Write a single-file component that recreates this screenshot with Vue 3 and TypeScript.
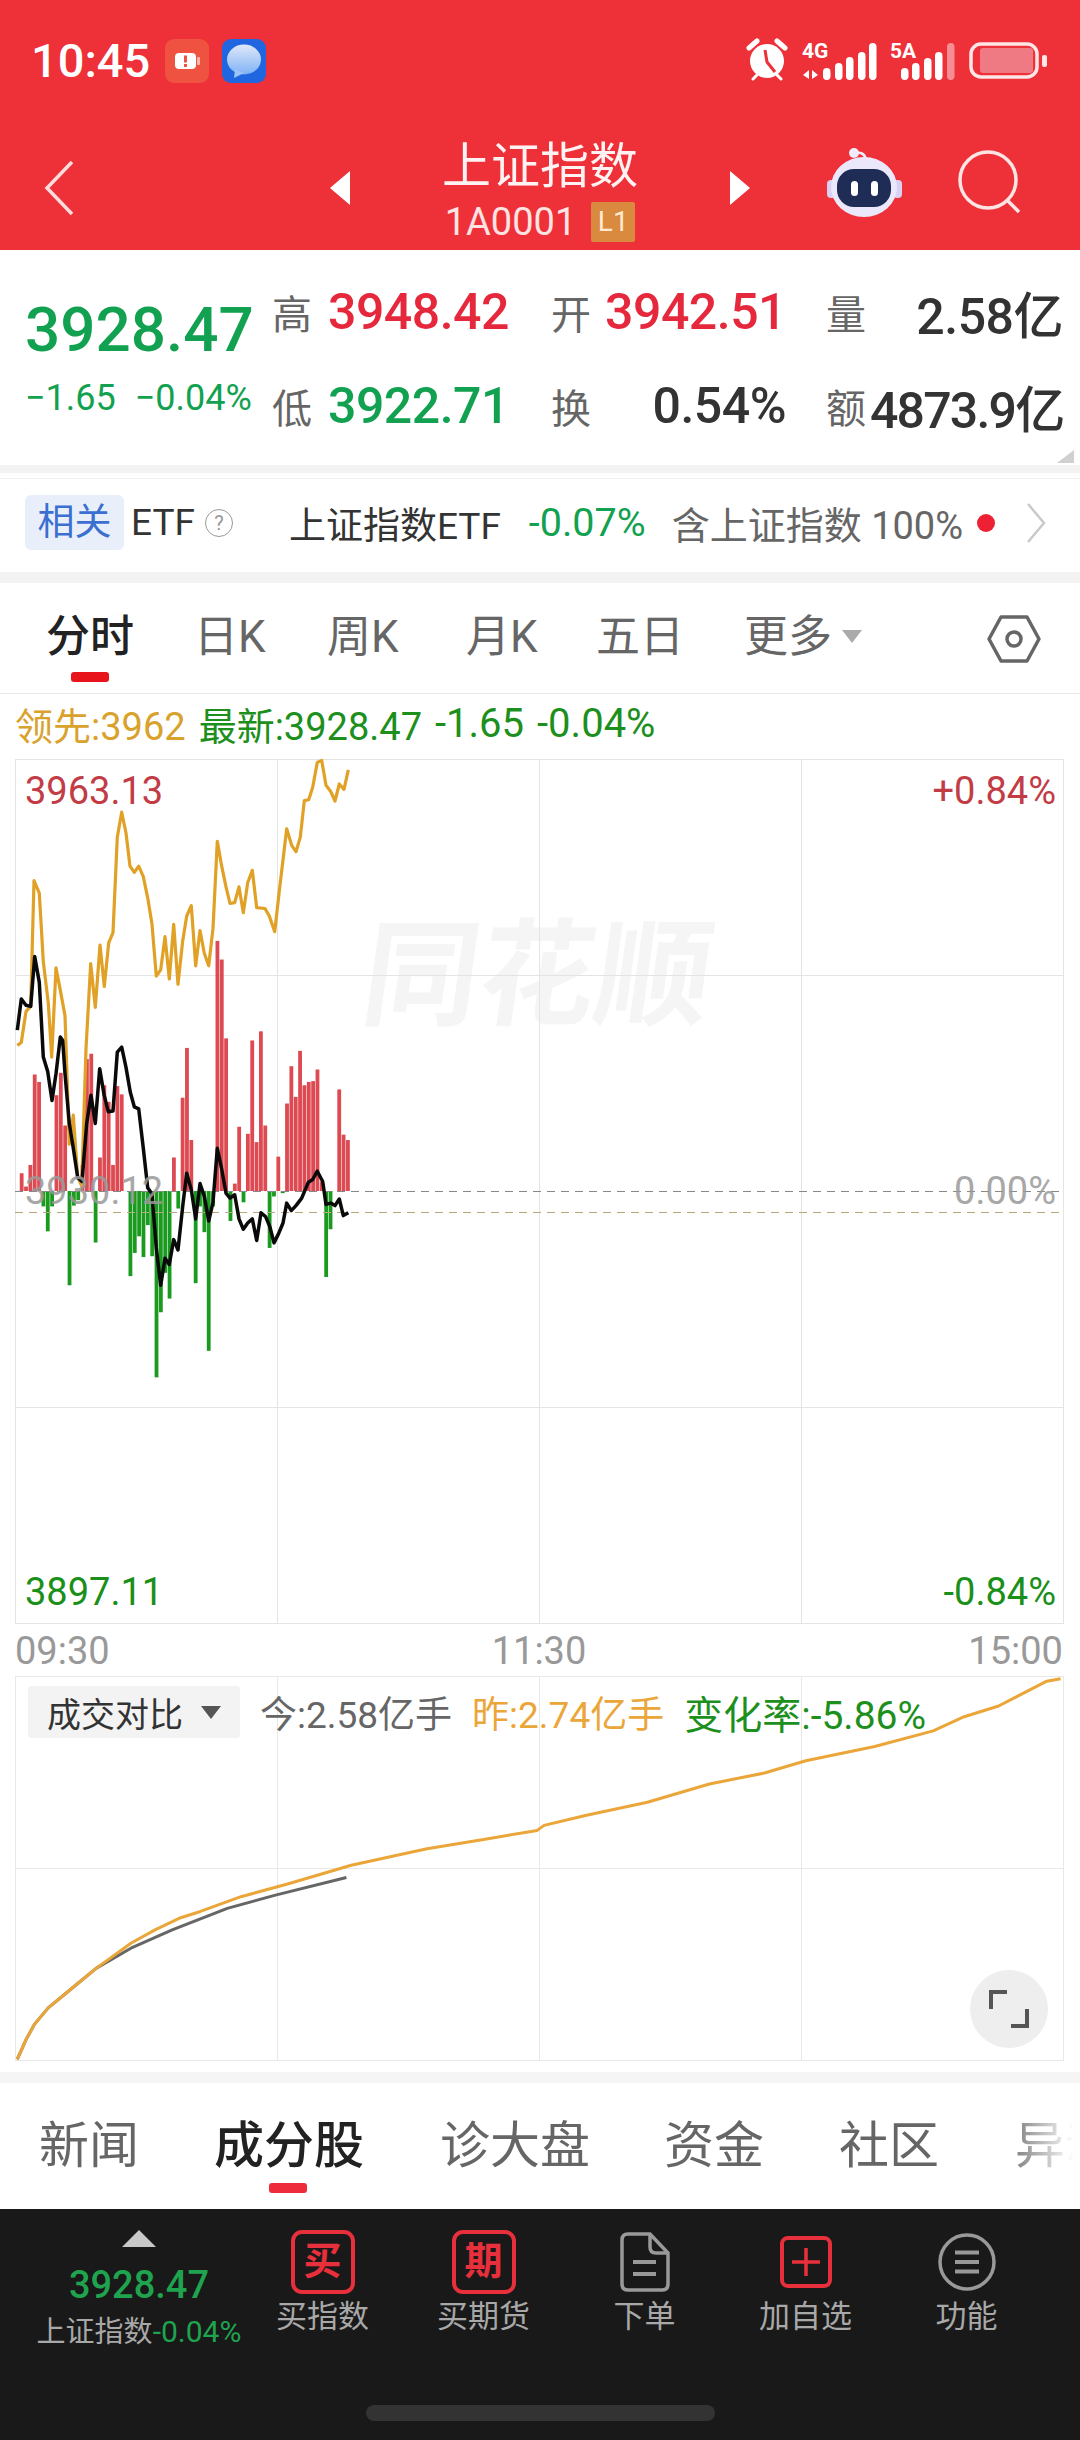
<template>
  <div class="page">
    <header class="top">
      <div class="status">
        <span class="time">10:45</span>
        <svg class="app-icon" viewBox="0 0 44 44">
          <rect width="44" height="44" rx="9" fill="#ef5240" />
          <rect x="10" y="14" width="21" height="16" rx="4" fill="#fff" />
          <rect x="32" y="18" width="3" height="8" rx="1" fill="#f7b9ae" />
          <rect x="19" y="16.500" width="3" height="7" fill="#ef5240" />
          <rect x="19" y="25" width="3" height="3" fill="#ef5240" />
        </svg>
        <svg class="app-icon" viewBox="0 0 44 44">
          <defs>
            <linearGradient id="msg" x1="0" y1="0" x2="0" y2="1">
              <stop offset="0" stop-color="#dfe8f8" />
              <stop offset="1" stop-color="#7fb2f5" />
            </linearGradient>
          </defs>
          <rect width="44" height="44" rx="9" fill="#1f66e0" />
          <ellipse cx="22" cy="20.500" rx="17" ry="15" fill="url(#msg)" />
          <path d="M13 30 L12 39 L22 34 Z" fill="#9cc3f6" />
        </svg>
        <div class="status-right">
          <svg width="302" height="46" viewBox="745 38 302 46">
            <circle cx="767" cy="61" r="17" fill="#fff" />
            <path d="M749 48 L757 41 M785 48 L777 41" stroke="#fff" stroke-width="5" stroke-linecap="round" />
            <path d="M753 79 L757 75 M781 79 L777 75" stroke="#fff" stroke-width="3" stroke-linecap="round" />
            <path d="M765 50 L767 62 L775 72" fill="none" stroke="#ee3038" stroke-width="3" />
            <text x="802" y="58" class="net">4G</text>
            <path d="M809 70 L803 75 L809 79 Z M812 70 L818 75 L812 79 Z" fill="#fff" />
            <rect v-for="b in signalA" :key="b.x" :x="b.x" :y="b.y" width="7.500" :height="80 - b.y" rx="3.700" fill="#fff" />
            <text x="890" y="58" class="net">5A</text>
            <rect v-for="b in signalB" :key="b.x" :x="b.x" :y="b.y" width="7.500" :height="80 - b.y" rx="3.700" :fill="b.x > 945 ? '#f58d93' : '#fff'" />
            <rect x="971" y="44" width="66" height="33" rx="10" fill="none" stroke="#ffe6e6" stroke-width="3.500" />
            <rect x="980" y="48" width="53" height="25" rx="3" fill="#f07a84" />
            <rect x="1042" y="55" width="5" height="12" rx="2" fill="#ffe6e6" />
          </svg>
        </div>
      </div>
      <div class="nav">
        <svg class="back" width="34" height="60" viewBox="0 0 34 60">
          <path d="M30 4 L5 30 L30 56" fill="none" stroke="#ffdcdc" stroke-width="3.500" />
        </svg>
        <div class="nav-center">
          <span class="tri-left"></span>
          <div class="title-block">
            <div class="title">上证指数</div>
            <div class="code">1A0001 <span class="level">L1</span></div>
          </div>
          <span class="tri-right"></span>
        </div>
        <div class="nav-right">
          <svg width="76" height="72" viewBox="829 147 76 72">
            <path d="M857 154 Q866 150 869 159" fill="none" stroke="#f0ecfb" stroke-width="2.500" />
            <circle cx="857" cy="153" r="5" fill="#f0ecfb" />
            <rect x="830" y="180" width="9" height="18" rx="4" fill="#d9d0f3" />
            <rect x="896" y="180" width="9" height="18" rx="4" fill="#d9d0f3" />
            <ellipse cx="867" cy="187" rx="33" ry="30" fill="#ece8fb" />
            <rect x="840" y="169" width="54" height="38" rx="17" fill="#1f2c55" />
            <rect x="854" y="181" width="7" height="15" rx="3.500" fill="#fff" />
            <rect x="874" y="181" width="7" height="15" rx="3.500" fill="#fff" />
          </svg>
          <svg width="66" height="70" viewBox="960 150 66 70">
            <circle cx="991" cy="183" r="28" fill="none" stroke="#ffe4e4" stroke-width="3.500" />
            <path d="M1011 204 L1022 215" stroke="#ffe4e4" stroke-width="3.500" />
          </svg>
        </div>
      </div>
    </header>

    <section class="quote">
      <div class="quote-main">
        <div class="price">3928.47</div>
        <div class="change"><span>−1.65</span><span>−0.04%</span></div>
      </div>
      <div class="quote-grid">
        <div class="stat"><span class="stat-label">高</span><span class="stat-value left up">3948.42</span></div>
        <div class="stat"><span class="stat-label">开</span><span class="stat-value up">3942.51</span></div>
        <div class="stat"><span class="stat-label">量</span><span class="stat-value">2.58亿</span></div>
        <div class="stat"><span class="stat-label">低</span><span class="stat-value left down">3922.71</span></div>
        <div class="stat"><span class="stat-label">换</span><span class="stat-value">0.54%</span></div>
        <div class="stat"><span class="stat-label">额</span><span class="stat-value tight">4873.9亿</span></div>
      </div>
      <svg class="corner" width="17" height="13" viewBox="0 0 17 13"><path d="M17 0 V13 H0 Z" fill="#d0d0d0" /></svg>
    </section>

    <section class="related">
      <span class="related-tag">相关</span>
      <span class="etf">ETF</span>
      <span class="help">?</span>
      <span class="etf-name">上证指数ETF</span>
      <span class="etf-change">-0.07%</span>
      <span class="etf-hold">含上证指数 100%</span>
      <span class="dot"></span>
      <svg width="20" height="44" viewBox="0 0 20 44"><path d="M2 3 L18 22 L2 41" fill="none" stroke="#c9c9c9" stroke-width="2.500" /></svg>
    </section>
    <div class="band"></div>

    <nav class="periods">
      <span class="period active">分时</span>
      <span class="period">日K</span>
      <span class="period">周K</span>
      <span class="period">月K</span>
      <span class="period">五日</span>
      <span class="period more">更多<i class="caret"></i></span>
      <svg class="gear" width="54" height="48" viewBox="0 0 54 48">
        <path d="M14 2 H40 L52 24 L40 46 H14 L2 24 Z" fill="none" stroke="#666" stroke-width="3.500" stroke-linejoin="round" />
        <circle cx="27" cy="24" r="7" fill="none" stroke="#666" stroke-width="3.500" />
      </svg>
    </nav>

    <div class="legend">
      <span class="gold">领先:3962</span>
      <span class="green">最新:3928.47</span>
      <span class="green wide">-1.65</span>
      <span class="green wide">-0.04%</span>
    </div>

    <svg class="chart-main" width="1080" height="866" viewBox="0 759 1080 866">
      <text x="358" y="1016" class="watermark" transform="skewX(-8) translate(143 0)">同花顺</text>
      <rect x="15.500" y="759.500" width="1048" height="864" fill="none" stroke="#e4e4e4" />
      <path d="M277.500 759 V1623 M539.500 759 V1623 M801.500 759 V1623 M15 975.500 H1064 M15 1407.500 H1064" stroke="#e4e4e4" />
      <rect v-for="bar in bars" :key="bar.x" :x="bar.x" :y="bar.y" width="3.800" :height="bar.h" :fill="bar.fill" />
      <path d="M15 1191.500 H1064" stroke="#888" stroke-dasharray="8 6" />
      <path d="M15 1212.500 H1064" stroke="#b8a97c" stroke-dasharray="8 6" />
      <polyline :points="goldLine" fill="none" stroke="#e0a126" stroke-width="3.200" stroke-linejoin="round" />
      <polyline :points="blackLine" fill="none" stroke="#0a0a0a" stroke-width="3.500" stroke-linejoin="round" />
      <text x="25" y="804" class="axis red">3963.13</text>
      <text x="1056" y="804" class="axis red" text-anchor="end">+0.84%</text>
      <text x="25" y="1204" class="axis muted">3930.12</text>
      <text x="1056" y="1204" class="axis muted" text-anchor="end">0.00%</text>
      <text x="25" y="1605" class="axis grn">3897.11</text>
      <text x="1056" y="1605" class="axis grn" text-anchor="end">-0.84%</text>
    </svg>

    <div class="times">
      <span>09:30</span>
      <span>11:30</span>
      <span>15:00</span>
    </div>

    <div class="compare">
      <svg width="1080" height="396" viewBox="0 1676 1080 396">
        <rect x="15.500" y="1676.500" width="1048" height="384" fill="none" stroke="#e8e8e8" />
        <path d="M277.500 1676 V2060 M539.500 1676 V2060 M801.500 1676 V2060 M15 1868.500 H1064" stroke="#e8e8e8" />
        <polyline :points="todayLine" fill="none" stroke="#666" stroke-width="3" stroke-linejoin="round" />
        <polyline :points="yesterdayLine" fill="none" stroke="#eba63a" stroke-width="3" stroke-linejoin="round" />
      </svg>
      <div class="compare-head">
        <span class="dropdown">成交对比<i class="caret dark"></i></span>
        <span class="gray">今:2.58亿手</span>
        <span class="orange">昨:2.74亿手</span>
        <span class="green rate">变化率:-5.86%</span>
      </div>
      <button class="expand">
        <svg width="40" height="38" viewBox="0 0 40 38">
          <path d="M2 19 V2 H18 M38 19 V36 H22" fill="none" stroke="#555" stroke-width="4" />
        </svg>
      </button>
    </div>
    <div class="band low"></div>

    <nav class="sections">
      <span>新闻</span>
      <span class="active">成分股</span>
      <span>诊大盘</span>
      <span>资金</span>
      <span>社区</span>
      <span>异动</span>
      <div class="fade"></div>
    </nav>

    <footer class="bar">
      <div class="bar-row">
        <div class="summary">
          <i class="up-tri"></i>
          <div class="sum-price">3928.47</div>
          <div class="sum-label">上证指数<em>-0.04%</em></div>
        </div>
        <div class="action">
          <div class="icon-slot"><span class="box">买</span></div>
          <span>买指数</span>
        </div>
        <div class="action">
          <div class="icon-slot"><span class="box">期</span></div>
          <span>买期货</span>
        </div>
        <div class="action">
          <div class="icon-slot">
            <svg width="50" height="60" viewBox="0 0 50 60">
              <path d="M8 2 H30 L48 21 V52 Q48 58 42 58 H8 Q2 58 2 52 V8 Q2 2 8 2 Z M30 2 V15 Q30 21 36 21 H48" fill="none" stroke="#999" stroke-width="3.500" />
              <path d="M13 30 H36 M13 42 H36" stroke="#999" stroke-width="4" />
            </svg>
          </div>
          <span>下单</span>
        </div>
        <div class="action">
          <div class="icon-slot">
            <svg width="52" height="52" viewBox="0 0 52 52">
              <rect x="2" y="2" width="48" height="48" rx="6" fill="none" stroke="#e8303c" stroke-width="4" />
              <path d="M12 26 H40 M26 12 V40" stroke="#e8303c" stroke-width="3.500" />
            </svg>
          </div>
          <span>加自选</span>
        </div>
        <div class="action">
          <div class="icon-slot">
            <svg width="58" height="58" viewBox="0 0 58 58">
              <circle cx="29" cy="29" r="27" fill="none" stroke="#999" stroke-width="3.500" />
              <path d="M17 19.500 H41 M17 29 H41 M17 38.500 H41" stroke="#999" stroke-width="4" />
            </svg>
          </div>
          <span>功能</span>
        </div>
      </div>
      <div class="home"></div>
    </footer>
  </div>
</template>

<script setup lang="ts">
type Pt = [number, number]

// points read off the reference crops, scaled back to page pixels below
const gold: Pt[] = [
  [52, 712], [64, 705], [78, 630], [92, 618], [102, 315], [118, 345], [130, 510], [145, 610], [155, 740],
  [168, 525], [180, 575], [195, 640], [208, 950], [220, 880], [233, 1030], [245, 1050], [258, 720], [272, 515],
  [286, 620], [300, 470], [313, 570], [326, 465], [339, 440], [352, 210], [365, 150], [378, 200], [390, 280],
  [403, 295], [416, 280], [430, 305], [444, 360], [456, 420], [469, 545], [482, 530], [495, 450], [508, 552],
  [521, 420], [534, 565], [548, 460], [560, 400], [574, 375], [587, 520], [600, 435], [613, 490], [626, 520],
  [639, 430], [652, 220], [665, 280], [678, 330], [690, 370], [704, 368], [717, 330], [730, 392], [743, 320],
  [757, 290], [770, 380], [795, 382], [808, 400], [824, 438], [838, 340], [860, 190], [875, 230], [888, 245],
  [901, 210], [913, 122], [926, 120], [938, 90], [952, 30], [965, 25], [978, 85], [992, 100], [1005, 123],
  [1018, 82], [1032, 95], [1045, 48],
]

const black: Pt[] = [
  [52, 675], [64, 600], [78, 615], [92, 618], [104, 498], [118, 560], [130, 740], [143, 775], [156, 845],
  [168, 780], [181, 692], [188, 700], [195, 780], [208, 900], [220, 960], [233, 1030], [246, 1040], [260, 900],
  [273, 832], [286, 900], [299, 768], [312, 830], [325, 872], [339, 870], [352, 728], [365, 716], [378, 765],
  [391, 825], [403, 860], [416, 865], [430, 960], [443, 1055], [456, 1070], [469, 1200], [482, 1290], [495, 1225],
  [508, 1240], [521, 1180], [534, 1205], [548, 1100], [560, 1020], [574, 1060], [587, 1130], [600, 1045],
  [613, 1075], [626, 1135], [639, 1090], [652, 960], [665, 1010], [678, 1068], [690, 1080], [704, 1072],
  [717, 1130], [730, 1155], [743, 1140], [757, 1130], [770, 1182], [783, 1115], [797, 1125], [810, 1150],
  [822, 1188], [836, 1165], [849, 1140], [860, 1092], [874, 1110], [888, 1098], [905, 1080], [925, 1042],
  [938, 1035], [952, 1015], [968, 1040], [978, 1095], [992, 1092], [1005, 1098], [1018, 1082], [1030, 1122],
  [1045, 1115],
]

// bar ends in crop coordinates, above the zero line is red, below is green, 0 means no bar
const barEnds = [
  1020, 1052, 1000, 782, 800, 1100, 1160, 1100, 832, 778, 905, 1290, 1098, 1085, 1000, 745, 732, 1187, 982, 808,
  848, 1000, 810, 830, 0, 1268, 1212, 1172, 1222, 1145, 1220, 1512, 1355, 1260, 1322, 982, 1105, 838, 718, 940,
  1285, 1100, 1162, 1448, 1100, 460, 505, 695, 1135, 1045, 908, 1090, 925, 700, 945, 678, 905, 1200, 1076, 980,
  1068, 852, 762, 836, 725, 808, 800, 798, 770, 1040, 1270, 1155, 0, 818, 927, 940,
]

const yesterday: Pt[] = [
  [25, 1445], [38, 1385], [50, 1340], [70, 1290], [105, 1230], [140, 1170], [190, 1095], [225, 1055], [260, 1020], [290, 1000], [350, 955],
  [420, 915], [510, 860], [620, 810], [700, 783], [780, 755], [790, 740], [850, 710], [940, 670], [1030, 615],
  [1110, 582], [1170, 545], [1270, 502], [1355, 455], [1400, 412], [1450, 380], [1520, 305], [1540, 298],
]

const today: Pt[] = [[25, 1445], [38, 1385], [50, 1340], [70, 1290], [105, 1230], [140, 1170], [190, 1110], [250, 1055], [330, 990], [400, 950], [503, 897]]

const toPoints = (pts: Pt[], sx: number, sy: number, oy: number) =>
  pts.map(([x, y]) => `${(x / sx).toFixed(1)},${(oy + y / sy).toFixed(1)}`).join(' ')

const goldLine = toPoints(gold, 3, 2.41, 750)
const blackLine = toPoints(black, 3, 2.41, 750)
const yesterdayLine = toPoints(yesterday, 1.452, 3.015, 1580)
const todayLine = toPoints(today, 1.452, 3.015, 1580)

const zeroY = 1191
const bars = barEnds
  .map((end, i) => ({ end, x: (65 + 13.05 * i) / 3 - 1.9 }))
  .filter((b) => b.end > 0)
  .map((b) => {
    const y = 750 + b.end / 2.41
    return {
      x: b.x,
      y: Math.min(y, zeroY),
      h: Math.abs(y - zeroY),
      fill: y < zeroY ? '#dd4a52' : '#1a9a1e',
    }
  })

const signalA = [
  { x: 823, y: 68 },
  { x: 835, y: 63 },
  { x: 846, y: 57 },
  { x: 858, y: 52 },
  { x: 869, y: 43 },
]
const signalB = [
  { x: 901, y: 68 },
  { x: 912, y: 63 },
  { x: 924, y: 58 },
  { x: 935, y: 52 },
  { x: 947, y: 43 },
]
</script>

<style scoped>
.page {
  position: relative;
  width: 1080px;
  height: 2440px;
  overflow: hidden;
  background: #fff;
  font-family: Roboto, "Noto Sans CJK SC", sans-serif;
  color: #333;
}

.top {
  height: 250px;
  background: #ee3038;
  color: #fff;
}

.status {
  display: flex;
  align-items: center;
  height: 140px;
  padding: 39px 33px 57px 31px;
  box-sizing: border-box;
}

.time {
  font-size: 47px;
  font-weight: 500;
  line-height: 44px;
  width: 134px;
}

.app-icon {
  width: 44px;
  height: 44px;
  margin-right: 13px;
}

.status-right {
  margin-left: auto;
  height: 46px;
}

.net {
  font-size: 21px;
  font-weight: 700;
  fill: #fff;
}

.nav {
  display: grid;
  grid-template-columns: 1fr auto 1fr;
  height: 110px;
  padding: 0 42px;
  box-sizing: border-box;
}

.back {
  margin-top: 18px;
}

.nav-center {
  display: flex;
  width: 420px;
  margin-top: -3px;
  justify-content: space-between;
  align-items: flex-start;
}

.tri-left,
.tri-right {
  width: 0;
  height: 0;
  margin-top: 34px;
  border-top: 17px solid transparent;
  border-bottom: 17px solid transparent;
}

.tri-left {
  border-right: 20px solid #fff;
}

.tri-right {
  border-left: 20px solid #fff;
}

.title-block {
  text-align: center;
}

.title {
  font-size: 49px;
  line-height: 60px;
  color: #fff2f2;
}

.code {
  display: flex;
  justify-content: center;
  align-items: center;
  gap: 15px;
  font-size: 38px;
  line-height: 40px;
  margin-top: 5px;
  color: #ffe3e3;
}

.level {
  width: 44px;
  height: 40px;
  background: #d98a3f;
  font-size: 28px;
  line-height: 40px;
  text-align: center;
  color: #ffe9cf;
  border-radius: 2px;
}

.nav-right {
  display: flex;
  justify-content: flex-end;
  align-items: flex-start;
  gap: 55px;
  margin: 7px 15px 0 0;
}

.quote {
  position: relative;
  display: flex;
  height: 215px;
  border-bottom: 8px solid #f3f3f3;
}

.quote-main {
  width: 272px;
  padding: 42px 0 0 25px;
  box-sizing: border-box;
}

.price {
  font-size: 62px;
  font-weight: 500;
  line-height: 76px;
  color: #12a150;
}

.change {
  display: flex;
  gap: 19px;
  margin-top: 10px;
  font-size: 36px;
  line-height: 40px;
  white-space: nowrap;
  color: #12a150;
}

.quote-grid {
  display: grid;
  grid-template-columns: 279px 275px 237px;
  grid-auto-rows: 60px;
  row-gap: 34px;
  padding-top: 32px;
}

.stat {
  display: flex;
  align-items: center;
}

.stat:nth-child(3n + 2) {
  padding-right: 40px;
}

.stat-label {
  font-size: 40px;
  color: #666;
  width: 44px;
  flex: none;
}

.stat-value {
  flex: 1;
  text-align: right;
  font-size: 50px;
  font-weight: 500;
  letter-spacing: -0.5px;
  white-space: nowrap;
  color: #333;
}

.stat-value.left {
  flex: none;
  margin-left: 12px;
  text-align: left;
}

.stat-value.tight {
  letter-spacing: -1.8px;
}

.up {
  color: #e5283c !important;
}

.down {
  color: #12a150 !important;
}

.corner {
  position: absolute;
  right: 6px;
  bottom: 2px;
}

.related {
  display: flex;
  align-items: center;
  height: 94px;
  margin-top: 5px;
  border-top: 1px solid #f1f1f1;
  padding: 0 0 6px 25px;
  font-size: 37px;
  box-sizing: border-box;
}

.related-tag {
  width: 99px;
  height: 55px;
  line-height: 55px;
  text-align: center;
  background: #e8effb;
  border-radius: 6px;
  color: #3b6fd0;
}

.etf {
  margin-left: 7px;
  color: #333;
}

.help {
  width: 26px;
  height: 26px;
  margin-left: 10px;
  border: 1px solid #999;
  border-radius: 50%;
  font-size: 20px;
  line-height: 26px;
  text-align: center;
  color: #999;
}

.etf-name {
  margin-left: 56px;
  color: #333;
}

.etf-change {
  margin-left: 28px;
  font-size: 39.5px;
  color: #12a150;
}

.etf-hold {
  margin-left: 26px;
  font-size: 38px;
  color: #666;
  white-space: nowrap;
}

.dot {
  width: 18px;
  height: 18px;
  margin: 0 31px 0 14px;
  border-radius: 50%;
  background: #ee2033;
}

.band {
  height: 11px;
  background: #f3f3f3;
}

.band.low {
  background: #f5f5f5;
}

.periods {
  position: relative;
  display: grid;
  grid-template-columns: 148px 133px 139px 130px 148px 1fr;
  align-items: center;
  height: 111px;
  padding: 0 0 10px 46px;
  box-sizing: border-box;
  border-bottom: 1px solid #e8e8e8;
  font-size: 44px;
  color: #666;
}

.period.active {
  position: relative;
  color: #222;
  font-weight: 500;
}

.period.active::after {
  content: "";
  position: absolute;
  left: 25px;
  bottom: -17px;
  width: 38px;
  height: 10px;
  border-radius: 3px;
  background: #e8141c;
}

.more {
  display: flex;
  align-items: center;
}

.caret {
  width: 0;
  height: 0;
  margin: 6px 0 0 10px;
  border-left: 10px solid transparent;
  border-right: 10px solid transparent;
  border-top: 13px solid #aaa;
}

.caret.dark {
  margin: 0 0 0 18px;
  border-top-color: #555;
}

.gear {
  position: absolute;
  right: 39px;
  top: 32px;
}

.legend {
  display: flex;
  align-items: center;
  gap: 13px;
  height: 65px;
  padding: 0 0 6px 15px;
  box-sizing: border-box;
  font-size: 38px;
  white-space: nowrap;
}

.legend .wide {
  font-size: 40px;
}

.gold {
  color: #d9a22c;
}

.green {
  color: #1c8f1c;
}

.gray {
  color: #666;
}

.orange {
  color: #eba63a;
}

.chart-main {
  display: block;
}

.watermark {
  font-size: 116px;
  font-weight: 700;
  fill: #f5f5f5;
}

.axis {
  font-size: 38px;
}

.red {
  fill: #c23c46;
}

.muted {
  fill: #999;
  opacity: 0.85;
}

.grn {
  fill: #1a8f1a;
}

.times {
  display: flex;
  justify-content: space-between;
  align-items: center;
  height: 51px;
  padding: 0 17px 0 15px;
  font-size: 38px;
  color: #999;
}

.compare {
  position: relative;
  height: 396px;
}

.compare svg {
  display: block;
}

.compare-head {
  position: absolute;
  left: 28px;
  top: 8px;
  display: flex;
  align-items: center;
  gap: 20px;
  font-size: 37px;
  white-space: nowrap;
}

.dropdown {
  display: flex;
  align-items: center;
  width: 212px;
  height: 52px;
  padding-left: 19px;
  box-sizing: border-box;
  background: #f3f3f3;
  border-radius: 3px;
  font-size: 34px;
  color: #333;
}

.rate {
  font-size: 39px;
}

.expand {
  position: absolute;
  left: 970px;
  top: 294px;
  width: 78px;
  height: 78px;
  padding: 0;
  border: none;
  border-radius: 50%;
  background: #eee;
  display: flex;
  align-items: center;
  justify-content: center;
}

.sections {
  position: relative;
  display: grid;
  grid-template-columns: 175px 226px 224px 175px 176px 100px;
  align-items: center;
  height: 126px;
  padding: 0 0 10px 39px;
  box-sizing: border-box;
  font-size: 50px;
  color: #666;
  white-space: nowrap;
}

.sections .active {
  position: relative;
  font-size: 50px;
  font-weight: 500;
  color: #222;
}

.sections .active::after {
  content: "";
  position: absolute;
  left: 55px;
  bottom: -16px;
  width: 38px;
  height: 10px;
  border-radius: 3px;
  background: #ee2b3b;
}

.fade {
  position: absolute;
  right: 0;
  top: 0;
  bottom: 0;
  width: 64px;
  background: linear-gradient(to right, rgba(255, 255, 255, 0.2), #fff 90%);
}

.bar {
  display: flex;
  flex-direction: column;
  height: 231px;
  padding-top: 21px;
  box-sizing: border-box;
  background: #191919;
  color: #a8a8a8;
}

.bar-row {
  display: grid;
  grid-template-columns: 242px repeat(5, 161px);
}

.summary {
  display: flex;
  flex-direction: column;
  align-items: center;
  padding-left: 36px;
  white-space: nowrap;
}

.up-tri {
  width: 0;
  height: 0;
  border-left: 17px solid transparent;
  border-right: 17px solid transparent;
  border-bottom: 17px solid #c8c8c8;
}

.sum-price {
  margin-top: 20px;
  font-size: 38px;
  font-weight: 500;
  line-height: 36px;
  color: #1fa34f;
}

.sum-label {
  margin-top: 13px;
  font-size: 29px;
  line-height: 32px;
}

.sum-label em {
  font-style: normal;
  font-size: 30px;
  color: #1fa34f;
}

.action {
  display: flex;
  flex-direction: column;
  align-items: center;
  font-size: 31px;
  line-height: 34px;
}

.icon-slot {
  display: flex;
  align-items: center;
  justify-content: center;
  height: 64px;
  margin-bottom: 6px;
}

.box {
  width: 64px;
  height: 64px;
  box-sizing: border-box;
  border: 4px solid #e8303c;
  border-radius: 11px;
  font-size: 38px;
  font-weight: 700;
  line-height: 54px;
  text-align: center;
  color: #e8303c;
}

.home {
  width: 349px;
  height: 16px;
  margin: auto auto 19px;
  border-radius: 8px;
  background: #333;
}
</style>

<style>
html,
body {
  margin: 0;
  background: #fff;
}
</style>
